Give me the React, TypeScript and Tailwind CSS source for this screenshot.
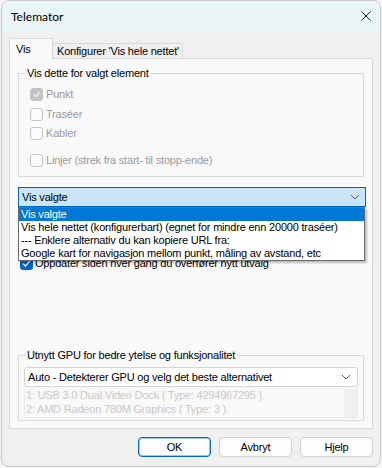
import React from 'react';

const Check = ({ color = 'white' }: { color?: string }) => (
  <svg viewBox="0 0 13 13" className="h-[13px] w-[13px]">
    <path d="M3.2 6.8 L5.4 9 L9.8 4.2" fill="none" stroke={color} strokeWidth="1.2" strokeLinecap="round" strokeLinejoin="round" />
  </svg>
);

const Chevron = () => (
  <svg viewBox="0 0 10 6" className="h-[6px] w-[10px]">
    <path d="M1 1 L5 5 L9 1" fill="none" stroke="#5f5f5f" strokeWidth="1" />
  </svg>
);

const CheckRow = ({ label, checked, className }: { label: string; checked?: boolean; className?: string }) => (
  <div className={`flex items-center gap-[3px] pl-[5px] text-[#9b9b9b] ${className ?? ''}`}>
    <span
      className={`flex h-[13px] w-[13px] items-center justify-center rounded-[3px] border ${
        checked ? 'border-[#c3c3c3] bg-[#c3c3c3]' : 'border-[#c4c4c4] bg-[#fbfbfb]'
      }`}
    >
      {checked && <Check />}
    </span>
    <span>{label}</span>
  </div>
);

const Button = ({ label, primary }: { label: string; primary?: boolean }) => (
  <button
    className={`flex h-[20px] w-[73px] items-center justify-center rounded-[4px] bg-[#fdfdfd] text-black ${
      primary
        ? 'border border-[#0067c0] shadow-[inset_0_0_0_1px_rgba(0,103,192,0.35)]'
        : 'border border-[#d0d0d0]'
    }`}
  >
    {label}
  </button>
);

const options = [
  'Vis valgte',
  'Vis hele nettet (konfigurerbart) (egnet for mindre enn 20000 traséer)',
  '--- Enklere alternativ du kan kopiere URL fra:',
  'Google kart for navigasjon mellom punkt, måling av avstand, etc',
];

const gpus = [
  '1: USB 3.0 Dual Video Dock ( Type: 4294967295 ).',
  '2: AMD Radeon 780M Graphics ( Type: 3 ).',
  '3: NVIDIA GeForce RTX 4060 Laptop GPU ( Type: 2 ).',
];

export default function App() {
  return (
    <div className="h-[468px] w-[382px] bg-[#f3f3f3] font-['Liberation_Sans',Arial,sans-serif] text-[11px] leading-[16px] tracking-[-0.2px] text-black">
      <div className="ml-[1px] flex h-[467px] w-[380px] flex-col overflow-hidden rounded-[8px] border border-[#c9c9c9] bg-[#f0f0f0]">
        {/* Title bar */}
        <div className="flex h-[30px] shrink-0 items-center justify-between bg-[#eaf5f8] pl-[9px] pr-[9px]">
          <span className="pt-[1px] font-['Lato',sans-serif] text-[12px] tracking-normal">Telemator</span>
          <svg viewBox="0 0 10 10" className="h-[10px] w-[10px]">
            <path d="M0.5 0.5 L9.5 9.5 M9.5 0.5 L0.5 9.5" stroke="#1a1a1a" strokeWidth="1" />
          </svg>
        </div>

        <div className="flex flex-col px-[7px] pt-[7px]">
          {/* Tabs */}
          <div className="flex h-[20px] items-end">
            <div className="relative z-10 -mb-px flex h-[21px] w-[44px] items-start border border-b-0 border-[#d9d9d9] bg-[#f9f9f9] pl-[6px] pt-[2px]">
              Vis
            </div>
            <div className="flex h-[15px] w-[130px] items-center whitespace-nowrap border border-b-0 border-l-0 border-[#d9d9d9] bg-[#f0f0f0] pl-[4px]">
              Konfigurer 'Vis hele nettet'
            </div>
          </div>

          {/* Tab panel */}
          <div className="relative flex h-[371px] flex-col border border-[#d9d9d9] bg-[#f9f9f9] px-[8px]">
            <fieldset className="mt-[6px] h-[112px] border border-[#d8d8d8] px-[6px]">
              <legend className="px-[2px]">Vis dette for valgt element</legend>
              <CheckRow label="Punkt" checked className="mt-[3px] h-[20px]" />
              <CheckRow label="Traséer" className="h-[20px]" />
              <CheckRow label="Kabler" className="h-[18px]" />
              <CheckRow label="Linjer (strek fra start- til stopp-ende)" className="mt-[8px] h-[20px]" />
            </fieldset>

            {/* Combo box, opened */}
            <div className="relative mt-[10px]">
              <div className="flex h-[20px] w-[348px] items-center justify-between border border-[#0067c0] bg-[#cce4f7] pl-[3px] pr-[5px]">
                <span>Vis valgte</span>
                <Chevron />
              </div>
              <ul className="absolute left-0 top-[20px] z-20 w-[347px] border border-[#6a6a6a] bg-white shadow-[2px_2px_2px_rgba(0,0,0,0.25)]">
                {options.map((o, i) => (
                  <li
                    key={o}
                    className={`h-[13px] whitespace-nowrap pl-[2px] leading-[13px] ${i === 0 ? 'bg-[#0078d7] text-white' : ''}`}
                  >
                    {o}
                  </li>
                ))}
              </ul>
            </div>

            <div className="mt-[48px] flex items-center gap-[2px] pl-[2px]">
              <span className="flex h-[13px] w-[13px] items-center justify-center rounded-[3px] bg-[#0067c0]">
                <Check />
              </span>
              <span>Oppdater siden hver gang du overfører nytt utvalg</span>
            </div>

            <fieldset className="mt-[76px] h-[74px] border border-[#d8d8d8] px-[5px]">
              <legend className="ml-[1px] px-[2px]">Utnytt GPU for bedre ytelse og funksjonalitet</legend>
              <div className="mt-[4px] flex h-[20px] items-center justify-between rounded-[3px] border border-[#d4d4d4] bg-white pl-[3px] pr-[6px]">
                <span>Auto - Detekterer GPU og velg det beste alternativet</span>
                <Chevron />
              </div>
              <div className="flex h-[31px] overflow-hidden border border-t-0 border-[#ececec]">
                <div className="min-w-0 flex-1 overflow-hidden pl-[1px] pt-[1px] leading-[14px] text-[#c8c8c8]">
                  {gpus.map(g => (
                    <div key={g} className="whitespace-nowrap">
                      {g}
                    </div>
                  ))}
                </div>
                <div className="mt-[2px] w-[13px] bg-[#efefef]" />
              </div>
            </fieldset>
          </div>

          {/* Buttons */}
          <div className="mt-[8px] flex justify-end gap-[8px]">
            <Button label="OK" primary />
            <Button label="Avbryt" />
            <Button label="Hjelp" />
          </div>
        </div>
      </div>
    </div>
  );
}
